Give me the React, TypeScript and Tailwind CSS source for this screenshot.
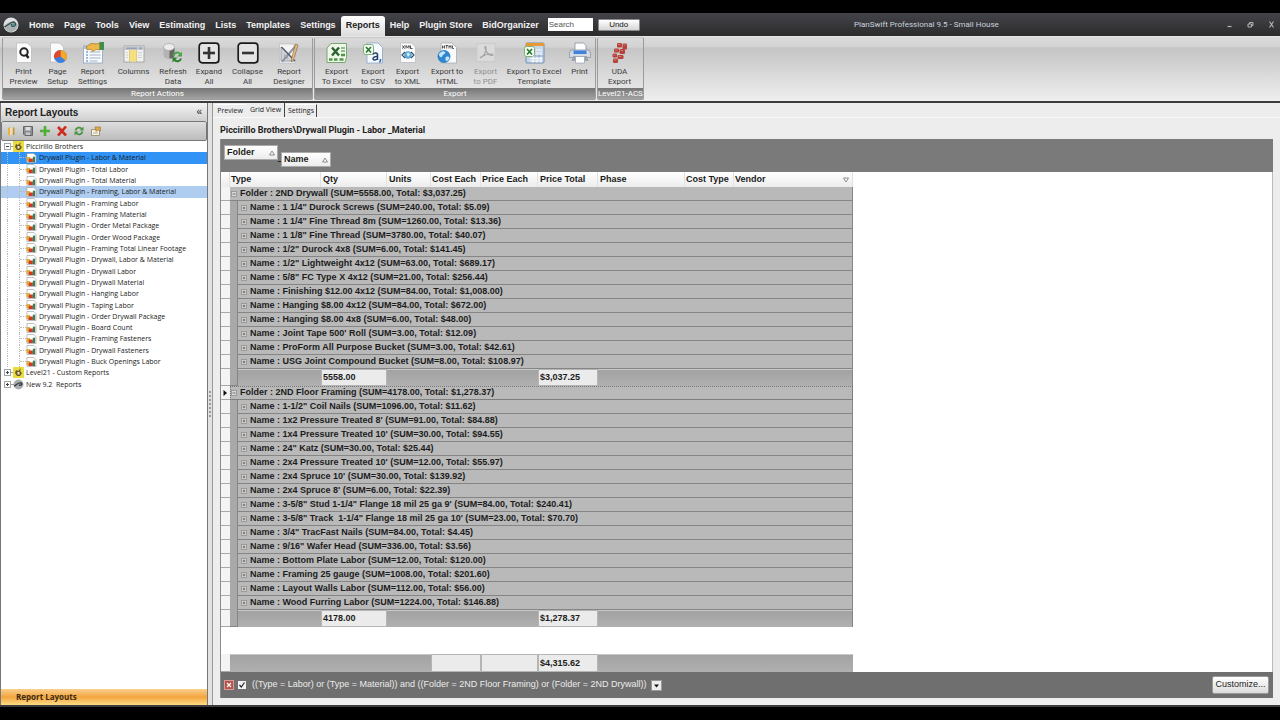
import { useState } from "react";
import type { ReactNode } from "react";
import clsx from "clsx";

const menuLeft = ["Home", "Page", "Tools", "View", "Estimating", "Lists", "Templates", "Settings"];
const menuRight = ["Help", "Plugin Store", "BidOrganizer"];

const layouts = [
  "Labor & Material",
  "Total Labor",
  "Total Material",
  "Framing, Labor & Material",
  "Framing Labor",
  "Framing Material",
  "Order Metal Package",
  "Order Wood Package",
  "Framing Total Linear Footage",
  "Drywall, Labor & Material",
  "Drywall Labor",
  "Drywall Material",
  "Hanging Labor",
  "Taping Labor",
  "Order Drywall Package",
  "Board Count",
  "Framing Fasteners",
  "Drywall Fasteners",
  "Buck Openings Labor",
];

const groups = [
  {
    title: "Folder : 2ND Drywall (SUM=5558.00, Total: $3,037.25)",
    qty: "5558.00",
    total: "$3,037.25",
    current: false,
    rows: [
      '1 1/4" Durock Screws (SUM=240.00, Total: $5.09)',
      '1 1/4" Fine Thread 8m (SUM=1260.00, Total: $13.36)',
      '1 1/8" Fine Thread (SUM=3780.00, Total: $40.07)',
      '1/2" Durock 4x8 (SUM=6.00, Total: $141.45)',
      '1/2" Lightweight 4x12 (SUM=63.00, Total: $689.17)',
      '5/8" FC Type X 4x12 (SUM=21.00, Total: $256.44)',
      "Finishing $12.00 4x12 (SUM=84.00, Total: $1,008.00)",
      "Hanging $8.00 4x12 (SUM=84.00, Total: $672.00)",
      "Hanging $8.00 4x8 (SUM=6.00, Total: $48.00)",
      "Joint Tape 500' Roll (SUM=3.00, Total: $12.09)",
      "ProForm All Purpose Bucket (SUM=3.00, Total: $42.61)",
      "USG Joint Compound Bucket (SUM=8.00, Total: $108.97)",
    ],
  },
  {
    title: "Folder : 2ND Floor Framing (SUM=4178.00, Total: $1,278.37)",
    qty: "4178.00",
    total: "$1,278.37",
    current: true,
    rows: [
      '1-1/2" Coil Nails (SUM=1096.00, Total: $11.62)',
      "1x2 Pressure Treated 8' (SUM=91.00, Total: $84.88)",
      "1x4 Pressure Treated 10' (SUM=30.00, Total: $94.55)",
      '24" Katz (SUM=30.00, Total: $25.44)',
      "2x4 Pressure Treated 10' (SUM=12.00, Total: $55.97)",
      "2x4 Spruce 10' (SUM=30.00, Total: $139.92)",
      "2x4 Spruce 8' (SUM=6.00, Total: $22.39)",
      "3-5/8\" Stud 1-1/4\" Flange 18 mil 25 ga 9' (SUM=84.00, Total: $240.41)",
      "3-5/8\" Track  1-1/4\" Flange 18 mil 25 ga 10' (SUM=23.00, Total: $70.70)",
      '3/4" TracFast Nails (SUM=84.00, Total: $4.45)',
      '9/16" Wafer Head (SUM=336.00, Total: $3.56)',
      "Bottom Plate Labor (SUM=12.00, Total: $120.00)",
      "Framing 25 gauge (SUM=1008.00, Total: $201.60)",
      "Layout Walls Labor (SUM=112.00, Total: $56.00)",
      "Wood Furring Labor (SUM=1224.00, Total: $146.88)",
    ],
  },
];

/* ---------- ribbon icons, all on a 22x22 canvas ---------- */

function Icon({ children }: { children: ReactNode }) {
  return (
    <svg viewBox="0 0 22 22" className="size-[22px] shrink-0" aria-hidden="true">
      {children}
    </svg>
  );
}

const Sheet = () => <path d="M3.5 1h11l4 4v15.500h-15z" fill="#fbfbfb" stroke="#b5b8bc" strokeWidth=".7" />;

const SmallExcel = ({ x = 1, y = 2 }) => (
  <g transform={`translate(${x} ${y})`}>
    <rect x=".5" y=".5" width="10" height="10" rx="2" fill="#f3faf0" stroke="#7fae76" />
    <path d="M3 3l5 5.500M8 3L3 8.500" stroke="#24752c" strokeWidth="1.600" />
  </g>
);

const PrintPreviewIcon = () => (
  <Icon>
    <Sheet />
    <circle cx="11" cy="10" r="3.700" fill="none" stroke="#222" strokeWidth="2" />
    <path d="M13 12.500l2.500 3.500" stroke="#222" strokeWidth="2.400" />
  </Icon>
);

const PageSetupIcon = () => (
  <Icon>
    <path d="M3.500 1h9l4 4v15h-13z" fill="#fbfbfb" stroke="#b5b8bc" strokeWidth=".7" />
    <circle cx="13.500" cy="14.500" r="6.500" fill="#3b7fe0" />
    <path d="M13.500 14.500V8a6.500 6.500 0 0 1 5 10.600z" fill="#f6a821" />
    <path d="M13.500 14.500V8a6.500 6.500 0 0 0-6.200 8.500z" fill="#e4482c" />
  </Icon>
);

const ReportSettingsIcon = () => (
  <Icon>
    <rect x="1.500" y="4" width="19" height="17" fill="#fafcff" stroke="#8fa3bd" strokeWidth=".8" />
    <path d="M1.500 4h19v3h-19z" fill="#a8bdd8" />
    <path d="M4 10h2M4 13h2M4 16h2M4 19h2" stroke="#4a78b5" strokeWidth="1.200" />
    <path d="M7.500 10h11M7.500 13h11M7.500 16h11M7.500 19h8" stroke="#9fb0c6" />
    <path d="M4.500 4.500L9 1.500l6 .5 3-1v7l-4-.5-3.500 2-1.500-2.500-4 1z" fill="#eeb94b" stroke="#a3741d" strokeWidth=".7" />
    <path d="M17.500 0H22v8h-4.500z" fill="#3f8f4a" />
  </Icon>
);

const ColumnsIcon = () => (
  <Icon>
    <rect x="1" y="4" width="20" height="16" fill="#f1f1ee" stroke="#9b9b9b" strokeWidth=".8" />
    <path d="M1.400 4.400h19.200v3.600H1.400z" fill="#c3c9d1" />
    <path d="M3 6.200h11M16 6.200h3" stroke="#8590a0" />
    <rect x="6.500" y="8" width="7" height="11.500" fill="#f6df7c" />
    <path d="M6.500 8v12M13.500 8v12" stroke="#c9b765" strokeWidth=".6" />
    <path d="M3 10.500h2M15 10.500h4M3 13h2M15 13h4M3 15.500h2M15 15.500h4" stroke="#d2d2d2" />
  </Icon>
);

const RefreshDataIcon = () => (
  <Icon>
    <path d="M1.500 5v8c0 5 11 5 11 0V5z" fill="#b4b4b4" />
    <path d="M7.500 6h5v8c-1 2-3 2.500-5 2.500z" fill="#666" />
    <ellipse cx="7" cy="5" rx="5.500" ry="3.500" fill="#ececec" stroke="#9a9a9a" strokeWidth=".6" />
    <path d="M11.500 14c.5-3.500 4.500-4.500 6.500-2" fill="none" stroke="#4aa548" strokeWidth="2" />
    <path d="M20 9.500v5h-5z" fill="#4aa548" />
    <path d="M19 16.500c-1 3.500-4.500 3.500-6.500 1.500" fill="none" stroke="#2f7f31" strokeWidth="2" />
    <path d="M10.500 20.500v-5h5z" fill="#2f7f31" />
  </Icon>
);

const BoxIcon = ({ plus = false }) => (
  <Icon>
    <rect x="1.200" y="1.200" width="19.600" height="19.600" rx="3" fill="#e4e4e4" stroke="#1b1b1b" strokeWidth="1.700" />
    <path d="M5 11h12" stroke="#333" strokeWidth="2.600" />
    {plus && <path d="M11 5v12" stroke="#333" strokeWidth="2.600" />}
  </Icon>
);

const DesignerIcon = () => (
  <Icon>
    <path d="M1.500 2h13l3 3v16h-16z" fill="#f3f4f6" stroke="#b9bcc0" strokeWidth=".7" />
    <path d="M3 5v14h14z" fill="#cfd3d8" stroke="#8a9099" strokeWidth=".8" />
    <path d="M6.500 12.500V16H10z" fill="#f3f4f6" stroke="#8a9099" strokeWidth=".6" />
    <path d="M3 19.500L17.500 2.500l1.500 1.500L5 20z" fill="#8b939c" />
    <path d="M3.500 5L17 19" stroke="#525b65" strokeWidth="1.400" />
    <path d="M17.500 2l2.500 1-4.500 15-2 2v-3z" fill="#e3bd88" stroke="#87602c" strokeWidth=".6" />
  </Icon>
);

const ExcelIcon = () => (
  <Icon>
    <path d="M5 1.500h15.500v14l-1.500 5H1V6z" fill="#eef7ea" stroke="#76a56e" />
    <path d="M6 5.500l7 8M13 5.500l-7 8" stroke="#2a6130" strokeWidth="2.400" />
    <path d="M15 6h4M15 9h4" stroke="#8cbf83" strokeWidth="1.800" />
    <path d="M3 17.500h3.500M8 17.500h3.500M13.500 17.500h4M15 13h4" stroke="#4f9649" strokeWidth="2.400" />
  </Icon>
);

const CsvIcon = () => (
  <Icon>
    <path d="M5 1h11l4.500 4.500V21H5z" fill="#f5faff" stroke="#8aa7c8" strokeWidth=".8" />
    <SmallExcel x={1} y={2} />
    <path d="M11 12.500c1-2 4.500-2 4.500.5V18M15.500 14.500c-5-.5-5.500 3.500-3 3.500 1.500 0 3-1 3-2" fill="none" stroke="#23406f" strokeWidth="1.500" />
    <path d="M18.500 17v1.500l-1 2" fill="none" stroke="#2a62b5" strokeWidth="1.500" />
  </Icon>
);

const XmlIcon = () => (
  <Icon>
    <Sheet />
    <path d="M5.500 3.500l2 3M7.500 3.500l-2 3M9 6.500v-3l1.500 2 1.500-2v3M13.500 3.500v3h2" fill="none" stroke="#333" strokeWidth=".9" />
    <circle cx="11" cy="13" r="3.800" fill="#5ea5d6" />
    <path d="M8 10L5 13l3 3M14 10l3 3-3 3" fill="none" stroke="#31536f" strokeWidth="1.200" />
    <path d="M9.500 11.500l2-1 1.500 2-2 2.500z" fill="#d8eefa" />
  </Icon>
);

const HtmlIcon = () => (
  <Icon>
    <path d="M5 1h11l4.500 4.500V21H5z" fill="#fafafa" stroke="#a8adb3" strokeWidth=".8" />
    <path d="M6.500 3.500v3M8.500 3.500v3M6.500 5h2M9.500 3.500h2.500M10.700 3.500v3M13 6.500v-3l1 1.500 1-1.500v3M16.500 3.500v3h1.500" fill="none" stroke="#333" strokeWidth=".8" />
    <circle cx="8" cy="14.500" r="6.500" fill="#2f86cf" />
    <path d="M3 12c2-3 5-3.500 6-2s-1 2-2 3-1 3-2.500 2S3 13 3 12zM10 15c1.500-1 3.500 0 3.500 1s-2 3-3 3-1.500-3-.5-4z" fill="#c4e6f8" />
  </Icon>
);

const PdfIcon = () => (
  <Icon>
    <rect x="2" y="1.500" width="18" height="18" fill="#dadada" stroke="#c9c9c9" strokeWidth=".8" />
    <path d="M5 16c4-2 6-6 6-10 0-2-1.500-1.500-1 0 1 4 3 7 7 7.500 1.500 0 1-1.500-1-1.500-4 0-7 1-10 3z" fill="none" stroke="#a3a3a3" strokeWidth="1.200" />
  </Icon>
);

const TemplateIcon = () => (
  <Icon>
    <rect x="3" y="1" width="18" height="20" rx="1" fill="#c6d6e8" stroke="#5f7fa5" strokeWidth=".8" />
    <path d="M3 1h18v3H3z" fill="#e79a33" />
    <SmallExcel x={1} y={4} />
    <path d="M13 8h6M13 11h6M7 16.500h12M7 19h12M10 14.500v6M14 12v8.500M18 12v8.500" stroke="#f7fbff" strokeWidth="1.200" />
    <path d="M12 14h8" stroke="#58799f" strokeWidth=".7" />
  </Icon>
);

const PrinterIcon = () => (
  <Icon>
    <path d="M6 1h8.500L17 3.500V10H6z" fill="#fdfdfd" stroke="#8994a2" strokeWidth=".8" />
    <path d="M2 8h18l1.500 3v4.500h-21V11z" fill="#d6dbe2" stroke="#8a94a0" strokeWidth=".8" />
    <path d="M4.500 8.500h13V12h-13z" fill="#3f83de" />
    <path d="M4 14h14l1.500 5h-17z" fill="#98a2b0" />
    <path d="M6.500 14.500h9V21h-9z" fill="#fff" stroke="#8994a2" strokeWidth=".6" />
  </Icon>
);

const UdaIcon = () => (
  <Icon>
    <g fill="#b5413a">
      <rect x="8" y="1" width="5" height="4.500" rx="1.200" />
      <rect x="13.500" y="1.500" width="4.500" height="6" rx="1.200" />
      <rect x="5" y="6.500" width="5" height="4" rx="1.200" />
      <rect x="10.500" y="7" width="5.500" height="5" rx="1.200" />
      <rect x="3.500" y="11.500" width="4.500" height="4" rx="1.200" />
      <rect x="8.500" y="13" width="6" height="4" rx="1.200" />
      <rect x="4" y="16.500" width="5" height="4.500" rx="1.200" />
    </g>
    <path d="M9 2.500h2.500M14.500 3h2M6 8h2.500M11.500 8.500h2.500M4.500 13h2M9.500 14.500h3M5 18h2.500" stroke="#d98a83" strokeWidth=".8" />
  </Icon>
);

type RibbonItem = { lines: string[]; icon: ReactNode; width: string; disabled?: boolean };

const reportActions: RibbonItem[] = [
  { lines: ["Print", "Preview"], icon: <PrintPreviewIcon />, width: "w-[37px]" },
  { lines: ["Page", "Setup"], icon: <PageSetupIcon />, width: "w-[31px]" },
  { lines: ["Report", "Settings"], icon: <ReportSettingsIcon />, width: "w-[39px]" },
  { lines: ["Columns"], icon: <ColumnsIcon />, width: "w-[43px]" },
  { lines: ["Refresh", "Data"], icon: <RefreshDataIcon />, width: "w-[36px]" },
  { lines: ["Expand", "All"], icon: <BoxIcon plus />, width: "w-[36px]" },
  { lines: ["Collapse", "All"], icon: <BoxIcon />, width: "w-[41px]" },
  { lines: ["Report", "Designer"], icon: <DesignerIcon />, width: "w-[42px]" },
];

const exportActions: RibbonItem[] = [
  { lines: ["Export", "To Excel"], icon: <ExcelIcon />, width: "w-[39px]" },
  { lines: ["Export", "to CSV"], icon: <CsvIcon />, width: "w-[34px]" },
  { lines: ["Export", "to XML"], icon: <XmlIcon />, width: "w-[35px]" },
  { lines: ["Export to", "HTML"], icon: <HtmlIcon />, width: "w-[44px]" },
  { lines: ["Export", "to PDF"], icon: <PdfIcon />, width: "w-[33px]", disabled: true },
  { lines: ["Export To Excel", "Template"], icon: <TemplateIcon />, width: "w-[64px]" },
  { lines: ["Print"], icon: <PrinterIcon />, width: "w-[27px]" },
];

const udaActions: RibbonItem[] = [{ lines: ["UDA", "Export"], icon: <UdaIcon />, width: "w-[39px]" }];

function RibbonGroup({ caption, items }: { caption: string; items: RibbonItem[] }) {
  return (
    <section className="flex flex-col justify-between rounded-[2px] border border-[#9c9c9c] border-t-[#c9c9c9] bg-[linear-gradient(to_bottom,#dadada_0%,#d2d2d2_15%,#c6c6c6_17%,#ececec_100%)]">
      <div className="flex px-[2px] pt-[4px]">
        {items.map((item) => (
          <button
            key={item.lines.join(" ")}
            disabled={item.disabled}
            className={clsx(
              "flex flex-col items-center whitespace-nowrap text-[8px] leading-[10px]",
              item.width,
              item.disabled ? "text-[#8f8f8f]" : "text-[#3c3c3c]"
            )}
          >
            {item.icon}
            <span className="mt-[3px]">{item.lines[0]}</span>
            {item.lines[1] && <span>{item.lines[1]}</span>}
          </button>
        ))}
      </div>
      <h2 className="h-[11px] bg-gradient-to-b from-[#767676] to-[#a2a2a2] text-center text-[8px] leading-[12px] text-white whitespace-nowrap">
        {caption}
      </h2>
    </section>
  );
}

/* ---------- title bar ---------- */

function TitleBar() {
  const item = "h-[20px] px-[5px] text-[#f2f2f2] whitespace-nowrap";
  return (
    <header className="flex h-[23px] items-center bg-gradient-to-b from-[#43434b] to-[#2c2c2c] pl-[3px] font-['Liberation_Sans',sans-serif] text-[9px]">
      <svg viewBox="0 0 16 16" className="size-[16px]" aria-hidden="true">
        <circle cx="8" cy="8" r="7.500" fill="#dfe2e2" />
        <path d="M1 9c4-5 11-6 14-1-1 5-5 7-7 7-3 0-6-2-7-6z" fill="#aab1b2" />
        <path d="M1.500 10l7-4.500c3-1.500 5.500 1.500 3 3.500-2 1-3.500-.5-3-2" fill="none" stroke="#36494c" strokeWidth="1.300" />
        <circle cx="10.500" cy="7.500" r="1.200" fill="#3b9d9a" />
      </svg>
      <nav className="ml-[5px] flex self-end font-bold">
        {menuLeft.map((name) => (
          <button key={name} className={item}>
            {name}
          </button>
        ))}
        <button className="h-[20px] rounded-t-[3px] bg-gradient-to-b from-white to-[#dcdcdc] px-[5px] text-[#222]">
          Reports
        </button>
        {menuRight.map((name) => (
          <button key={name} className={item}>
            {name}
          </button>
        ))}
      </nav>
      <input
        aria-label="Search"
        placeholder="Search"
        className="ml-[4px] h-[13px] w-[45px] bg-white px-[1px] text-[8px] placeholder:text-[#555]"
      />
      <button className="ml-[5px] h-[12px] w-[42px] rounded-[1px] border border-[#8a8a8a] bg-gradient-to-b from-white to-[#d6d6d6] text-[8px] leading-[10px] text-[#111]">
        Undo
      </button>
      <h1 className="flex-1 pr-[12px] text-center font-['Roboto',sans-serif] text-[8px] text-[#c9d2df]">
        PlanSwift Professional 9.5 - Small House
      </h1>
      <div className="flex items-center gap-[12px] pr-[4px] text-[#b5b5b5]">
        <button aria-label="Minimize" className="size-[9px]">
          <svg viewBox="0 0 9 9">
            <path d="M2.500 6.500h4" stroke="currentColor" strokeWidth="1.200" />
          </svg>
        </button>
        <button aria-label="Restore" className="size-[9px]">
          <svg viewBox="0 0 9 9" fill="none" stroke="currentColor">
            <path d="M2 4h3.500v3H2zM3.500 4V2.500h3.500v3H5.500" />
          </svg>
        </button>
        <button aria-label="Close" className="size-[9px]">
          <svg viewBox="0 0 9 9">
            <path d="M2.500 1.500l4 6M6.500 1.500l-4 6" stroke="currentColor" strokeWidth="1.100" />
          </svg>
        </button>
      </div>
    </header>
  );
}

/* ---------- report layouts tree ---------- */

const ReportIcon = () => (
  <svg viewBox="0 0 11 11" className="h-[10px] w-[11px] shrink-0" aria-hidden="true">
    <path d="M.5.500h7.500l2.500 2.500v7.500H.5z" fill="#fff" stroke="#9a9a9a" strokeWidth=".7" />
    <path d="M0 4.500h4V9H0z" fill="#e3a83a" />
    <path d="M3 6h4v4H2z" fill="#cf3a22" />
    <path d="M7 4h2.500v6H7z" fill="#35805a" />
  </svg>
);

const YellowIcon = () => (
  <svg viewBox="0 0 11 11" className="h-[11px] w-[11px] shrink-0" aria-hidden="true">
    <path d="M0 0h11v11H0z" fill="#e9dc3f" />
    <path d="M3 3l2 1 3-3-1 3 2 2-2 3H4L2 6z" fill="#6b5a2a" />
    <path d="M4.500 5h2v2.500h-2z" fill="#f4ecc0" />
  </svg>
);

const SwiftIcon = () => (
  <svg viewBox="0 0 11 11" className="h-[11px] w-[11px] shrink-0" aria-hidden="true">
    <circle cx="5.500" cy="5.500" r="5" fill="#a9adb0" />
    <path d="M1 7c3-1 4-4 7-3 2 1 0 3-2 2" fill="none" stroke="#333a40" strokeWidth="1.400" />
  </svg>
);

function Expander({ open = false, label }: { open?: boolean; label: string }) {
  return (
    <button aria-label={label} aria-expanded={open} className="size-[7px] shrink-0">
      <svg viewBox="0 0 7 7" fill="none">
        <rect x=".5" y=".5" width="6" height="6" fill="#fff" stroke="#a5a5a5" />
        <path d={open ? "M2 3.500h3" : "M2 3.500h3M3.500 2v3"} stroke="#444" />
      </svg>
    </button>
  );
}

function TreeRoot({ name, icon, open }: { name: string; icon: ReactNode; open?: boolean }) {
  return (
    <li className="flex flex-1 items-center pl-[3px]">
      <Expander open={open} label={name} />
      <span className="w-[2px] border-t border-dotted border-[#999]" />
      {icon}
      <span className="ml-[2px]">{name}</span>
    </li>
  );
}

function Sidebar() {
  const [selected, setSelected] = useState(0);

  return (
    <aside className="flex w-[208px] shrink-0 flex-col border-x border-[#777] bg-white">
      <div className="flex h-[18px] items-center justify-between bg-gradient-to-b from-[#f4f4f4] to-[#cfcfcf] pl-[4px] pr-[5px] font-['Liberation_Sans',sans-serif] text-[#222]">
        <h2 className="text-[10px] font-bold">Report Layouts</h2>
        <button aria-label="Collapse panel" className="text-[10px] leading-[10px]">
          «
        </button>
      </div>
      <div className="flex h-[20px] items-center gap-[7px] rounded-[2px] border border-[#777] bg-gradient-to-b from-[#dedede] to-[#bcbcbc] pl-[4px]">
        <button aria-label="Open" className="size-[10px]">
          <svg viewBox="0 0 10 10">
            <path d="M2 2l2-1v8H2z" fill="#e7b53c" />
            <path d="M5 3h1v6H5zM7 1.500h1.500V9H7z" fill="#c79530" />
            <path d="M4 2h2v7H4z" fill="#f0dfae" />
          </svg>
        </button>
        <button aria-label="Save" className="size-[10px]">
          <svg viewBox="0 0 10 10">
            <path d="M.5.500h9v9H2l-1.500-1.500z" fill="#8b8f94" stroke="#666" />
            <path d="M2.500 1h5v3.500h-5z" fill="#ddd" />
            <path d="M3 6.500h4V9H3z" fill="#c9c9c9" />
          </svg>
        </button>
        <button aria-label="Add" className="size-[10px]">
          <svg viewBox="0 0 10 10">
            <path d="M3.700 0h2.600v3.700H10v2.600H6.300V10H3.700V6.300H0V3.700h3.700z" fill="#4fae36" />
          </svg>
        </button>
        <button aria-label="Delete" className="size-[10px]">
          <svg viewBox="0 0 10 10">
            <path d="M1 1l8 8.500M9 .5L1 9.500" stroke="#cf2a1c" strokeWidth="2.600" />
          </svg>
        </button>
        <button aria-label="Refresh" className="size-[10px]">
          <svg viewBox="0 0 10 10" fill="none" stroke="#4a9444" strokeWidth="1.800">
            <path d="M1.500 4.500c.5-3 4.500-4 6.500-1.500M8.500 5.500c-.5 3-4.500 4-6.500 1.500" />
            <path d="M9.500.500v4h-4zM.5 9.500v-4h4z" fill="#4a9444" stroke="none" />
          </svg>
        </button>
        <button aria-label="Properties" className="size-[10px]">
          <svg viewBox="0 0 10 10">
            <path d="M.5 3.500h8v6h-8z" fill="#f6f2e4" stroke="#8e8468" strokeWidth=".8" />
            <path d="M4 1h5.500v4L7 4 5 5.500z" fill="#dfa84a" stroke="#99702b" strokeWidth=".6" />
            <path d="M2 7h5" stroke="#999" strokeWidth=".8" />
          </svg>
        </button>
      </div>

      <ul className="flex h-[249px] flex-col text-[7px] leading-[11px] text-[#1a1a1a] whitespace-pre">
        <TreeRoot name="Piccirillo Brothers" icon={<YellowIcon />} open />
        {layouts.map((name, i) => (
          <li key={name} className="flex-1">
            <button
              onClick={() => setSelected(i)}
              className={clsx(
                "flex h-full w-full items-center text-left",
                i === selected && "bg-[#3093f5]",
                i === 3 && i !== selected && "bg-[#aecdf0]"
              )}
            >
              <span className="ml-[6px] h-full w-[12px] border-l border-dotted border-[#bbb]" />
              <span className="flex h-full w-[7px] items-center border-l border-dotted border-[#bbb]">
                <span className="w-full border-t border-dotted border-[#bbb]" />
              </span>
              <ReportIcon />
              <span className="ml-[2px]">Drywall Plugin - {name}</span>
            </button>
          </li>
        ))}
        <TreeRoot name="Level21 - Custom Reports" icon={<YellowIcon />} />
        <TreeRoot name="New 9.2  Reports" icon={<SwiftIcon />} />
      </ul>

      <div className="flex-1" />
      <button className="h-[16px] bg-gradient-to-b from-[#fbd08c] via-[#f3a53c] to-[#fbdc84] pl-[15px] text-left text-[8px] font-bold text-[#3b2a14]">
        Report Layouts
      </button>
    </aside>
  );
}

/* ---------- grid ---------- */

const IndicatorCell = ({ current = false }) => (
  <td className="border-b border-[#a9a9a9] bg-[#f4f4f4] p-0">
    {current && (
      <svg viewBox="0 0 8 8" className="size-[8px]" aria-label="Current row">
        <path d="M2.500 1l3.500 3-3.500 3z" fill="#111" />
      </svg>
    )}
  </td>
);

function GridExpander({ open = false, label }: { open?: boolean; label: string }) {
  return (
    <button aria-label={label} aria-expanded={open} className="mr-[3px] size-[6px] shrink-0">
      <svg viewBox="0 0 6 6" fill="none">
        <rect x=".5" y=".5" width="5" height="5" fill="#dadada" stroke="#8f8f8f" strokeWidth=".8" />
        <path d={open ? "M1.500 3h3" : "M1.500 3h3M3 1.500v3"} stroke="#555" strokeWidth=".8" />
      </svg>
    </button>
  );
}

function Grid() {
  const head = "border-r border-[#e2e2e2] bg-gradient-to-b from-white to-[#ececec] p-0 text-left font-bold";
  const band = "border-t border-t-[#c9c9c9] bg-gradient-to-b from-[#a2a2a2] to-[#b0b0b0] p-0";
  const sum = "border border-[#b5b5b5] bg-[#ebebeb] p-0 pl-px";
  const rowBg = "border-b border-[#858585] bg-[#b9b9b9] p-0";

  return (
    <table className="w-[632px] table-fixed border-separate border-spacing-0 font-bold leading-[13px] whitespace-pre">
      <colgroup>
        <col className="w-[9px]" />
        <col className="w-[8px]" />
        <col className="w-[83px]" />
        <col className="w-[66px]" />
        <col className="w-[44px]" />
        <col className="w-[50px]" />
        <col className="w-[57px]" />
        <col className="w-[60px]" />
        <col className="w-[87px]" />
        <col className="w-[49px]" />
        <col className="w-[119px]" />
      </colgroup>
      <thead>
        <tr className="h-[15px]">
          <td className={head} />
          <th colSpan={2} className={clsx(head, "pl-px")}>Type</th>
          <th className={clsx(head, "pl-[2px]")}>Qty</th>
          <th className={clsx(head, "pl-[2px]")}>Units</th>
          <th className={clsx(head, "pl-px")}>Cost Each</th>
          <th className={clsx(head, "pl-px")}>Price Each</th>
          <th className={clsx(head, "pl-[2px]")}>Price Total</th>
          <th className={clsx(head, "pl-[2px]")}>Phase</th>
          <th className={clsx(head, "pl-px")}>Cost Type</th>
          <th className={clsx(head, "pl-px pr-[3px]")}>
            <span className="flex items-center justify-between">
              Vendor
              <svg viewBox="0 0 6 6" className="size-[6px]" fill="none" stroke="#777" aria-hidden="true">
                <path d="M.5 1h5L3 5z" strokeWidth=".8" />
              </svg>
            </span>
          </th>
        </tr>
      </thead>
      {groups.map((group) => (
        <tbody key={group.title}>
          <tr>
            <IndicatorCell current={group.current} />
            <td
              colSpan={10}
              className={clsx(rowBg, "border-r", group.current && "outline-1 -outline-offset-1 outline-dotted outline-[#777]")}
            >
              <span className="flex items-center pl-px">
                <GridExpander open label={group.title} />
                {group.title}
              </span>
            </td>
          </tr>
          {group.rows.map((row) => (
            <tr key={row}>
              <IndicatorCell />
              <td className="border-r border-[#858585] bg-[#a9a9a9] p-0" />
              <td colSpan={9} className={clsx(rowBg, "border-r")}>
                <span className="flex items-center pl-[3px]">
                  <GridExpander label={row} />
                  {"Name : " + row}
                </span>
              </td>
            </tr>
          ))}
          <tr className="h-[17px]">
            <IndicatorCell />
            <td className="border-r border-b border-[#858585] bg-[#a9a9a9] p-0" />
            <td className={band} />
            <td className={sum}>{group.qty}</td>
            <td colSpan={3} className={band} />
            <td className={sum}>{group.total}</td>
            <td colSpan={3} className={clsx(band, "border-r border-r-[#858585]")} />
          </tr>
        </tbody>
      ))}
      <tfoot>
        <tr className="h-[27px]">
          <td colSpan={11} className="bg-white p-0" />
        </tr>
        <tr className="h-[18px]">
          <IndicatorCell />
          <td colSpan={4} className={band} />
          <td className={sum} />
          <td className={sum} />
          <td className={sum}>$4,315.62</td>
          <td colSpan={3} className={band} />
        </tr>
      </tfoot>
    </table>
  );
}

const SortMark = () => (
  <svg viewBox="0 0 6 6" className="size-[6px]" fill="none" stroke="#777" aria-hidden="true">
    <path d="M.5 5h5L3 1z" strokeWidth=".8" />
  </svg>
);

function Main() {
  const [tab, setTab] = useState("Grid View");
  const [filterOn, setFilterOn] = useState(true);

  return (
    <main className="flex min-w-0 flex-1 flex-col bg-[#ededed]">
      <div className="flex h-[14px] items-end gap-px pl-[2px] text-[7px] text-[#222]">
        {["Preview", "Grid View", "Settings"].map((name) => (
          <button
            key={name}
            onClick={() => setTab(name)}
            className={clsx(
              "whitespace-nowrap border-r leading-[12px]",
              tab === name ? "h-[14px] w-[38px] border-[#444]" : "h-[13px] w-[31px] border-t border-t-white",
              name === "Settings" ? "border-r-[#444]" : name === "Preview" && "border-r-transparent"
            )}
          >
            {name}
          </button>
        ))}
      </div>
      <div className="flex flex-1 flex-col border-t border-[#f8f8f8] pb-[7px] pl-[7px] pr-[7px]">
        <h2 className="h-[21px] font-['Roboto',sans-serif] text-[9px] font-bold leading-[24px] text-[#222] whitespace-nowrap">
          Piccirillo Brothers\Drywall Plugin - Labor _Material
        </h2>
        <div className="flex flex-1 flex-col border-l border-[#8b8b8b] bg-white font-['Liberation_Sans',sans-serif] text-[9px] text-[#1c1c1c]">
          <div className="flex h-[33px] items-start bg-[#7a7a7a] pl-[3px] pt-[6px] font-bold leading-[13px]">
            <button className="flex h-[15px] w-[54px] items-center justify-between border border-[#aaa] bg-gradient-to-b from-white to-[#ececec] px-[2px]">
              Folder <SortMark />
            </button>
            <span className="mt-[15px] h-[2px] w-[3px] border-b border-[#222]" />
            <button className="mt-[7px] flex h-[15px] w-[50px] items-center justify-between border border-[#aaa] bg-gradient-to-b from-white to-[#ececec] px-[2px]">
              Name <SortMark />
            </button>
          </div>
          <div className="flex-1 border-r border-[#bbb]">
            <Grid />
          </div>
          <div className="flex h-[26px] items-center bg-[#6f6f6f] pl-[3px] pr-[4px] text-[#ececec]">
            <button aria-label="Clear filter" className="size-[10px]">
              <svg viewBox="0 0 10 10">
                <rect x=".5" y=".5" width="9" height="9" fill="#b5524d" stroke="#d99b97" />
                <path d="M3 3l4 4M7 3L3 7" stroke="#fff" strokeWidth="1.200" />
              </svg>
            </button>
            <label className="ml-[4px] flex items-center whitespace-nowrap">
              <span className="relative mr-[6px] size-[8px]">
                <input
                  type="checkbox"
                  checked={filterOn}
                  onChange={() => setFilterOn(!filterOn)}
                  className="peer block size-[8px] appearance-none bg-[#f2f2f2]"
                />
                <svg viewBox="0 0 8 8" className="pointer-events-none invisible absolute inset-0 peer-checked:visible">
                  <path d="M1.500 4l1.800 2L6.500 1.500" fill="none" stroke="#222" strokeWidth="1.200" />
                </svg>
              </span>
              ((Type = Labor) or (Type = Material)) and ((Folder = 2ND Floor Framing) or (Folder = 2ND Drywall))
            </label>
            <button aria-label="Recent filters" className="ml-[4px] size-[11px] border border-[#999] bg-[#eee]">
              <svg viewBox="0 0 9 9">
                <path d="M2 3.500h5L4.500 6.500z" fill="#111" />
              </svg>
            </button>
            <button className="ml-auto h-[18px] w-[57px] rounded-[2px] border border-[#9a9a9a] bg-gradient-to-b from-white to-[#dcdcdc] text-[#222]">
              Customize...
            </button>
          </div>
        </div>
      </div>
    </main>
  );
}

export default function App() {
  return (
    <div className="flex min-h-screen flex-col bg-black pt-[13px] pb-[14px] font-['Open_Sans',sans-serif]">
      <TitleBar />
      <div className="flex h-[65px] gap-px border-t border-[#e6e6e6] bg-[linear-gradient(to_bottom,#dcdcdc_0%,#d2d2d2_15%,#c4c4c4_17%,#efefef_100%)] px-[2px] pb-px font-['Roboto',sans-serif]">
        <RibbonGroup caption="Report Actions" items={reportActions} />
        <RibbonGroup caption="Export" items={exportActions} />
        <RibbonGroup caption="Level21-ACS" items={udaActions} />
      </div>
      <div className="flex flex-1 border-y-2 border-[#3c3c3c]">
        <Sidebar />
        <div className="flex w-[5px] items-center justify-center border-r border-[#999] bg-[#e2e2e2]">
          <span className="h-[26px] w-[2px] border-l-2 border-dotted border-[#999]" />
        </div>
        <Main />
      </div>
    </div>
  );
}
